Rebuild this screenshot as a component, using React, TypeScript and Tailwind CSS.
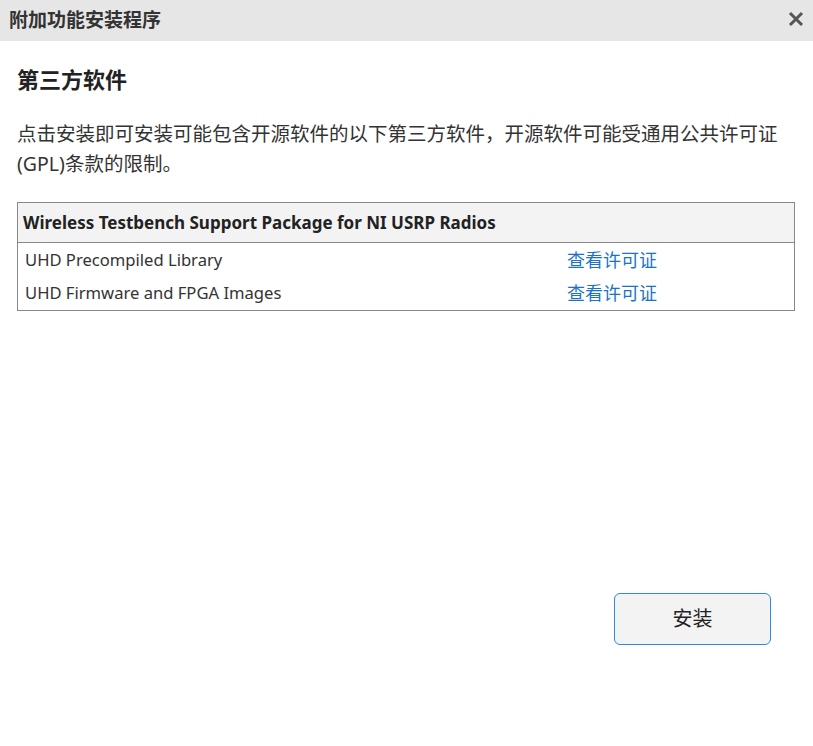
import React from "react";

const font = { fontFamily: '"Noto Sans", "Noto Sans CJK SC", sans-serif' };

export default function App() {
  return (
    <div className="w-[813px] h-[746px] bg-white flex flex-col text-[#222]" style={font}>
      <div className="h-[41px] bg-[#e6e6e6] flex items-center justify-between pl-[9px] pr-[9px] shrink-0">
        <span className="text-[19px] font-bold text-[#333] leading-none">附加功能安装程序</span>
        <svg width="16" height="16" viewBox="0 0 16 16" className="mt-[-4px]">
          <path d="M2 2 L14 14 M14 2 L2 14" stroke="#555" strokeWidth="3" strokeLinecap="butt" />
        </svg>
      </div>
      <div className="flex flex-col pl-[17px] pr-[18px] flex-1">
        <h1 className="text-[22px] font-bold mt-[24px] leading-[28px] text-[#222]">第三方软件</h1>
        <p className="text-[19.5px] leading-[30px] mt-[26px] text-[#333] whitespace-nowrap">
          点击安装即可安装可能包含开源软件的以下第三方软件，开源软件可能受通用公共许可证
          <br />
          (GPL)条款的限制。
        </p>
        <div className="mt-[23px] border border-[#888] w-[778px]">
          <div className="h-[40px] bg-[#f3f3f3] border-b border-[#888] flex items-center pl-[5px] text-[17px] font-bold text-[#222]">
            Wireless Testbench Support Package for NI USRP Radios
          </div>
          <div className="flex flex-col pt-[1px]">
            <div className="flex items-center h-[33px] text-[16.6px] text-[#333]">
              <span className="w-[549px] pl-[7px]">UHD Precompiled Library</span>
              <span className="text-[#1a73c8] text-[18px]">查看许可证</span>
            </div>
            <div className="flex items-center h-[33px] text-[16.6px] text-[#333]">
              <span className="w-[549px] pl-[7px]">UHD Firmware and FPGA Images</span>
              <span className="text-[#1a73c8] text-[18px]">查看许可证</span>
            </div>
          </div>
        </div>
        <div className="flex justify-end mt-[282px] pr-[24px]">
          <button className="w-[157px] h-[52px] rounded-[6px] border border-[#2d8ae0] bg-[#f3f3f3] text-[20px] text-[#222]">
            安装
          </button>
        </div>
      </div>
    </div>
  );
}
